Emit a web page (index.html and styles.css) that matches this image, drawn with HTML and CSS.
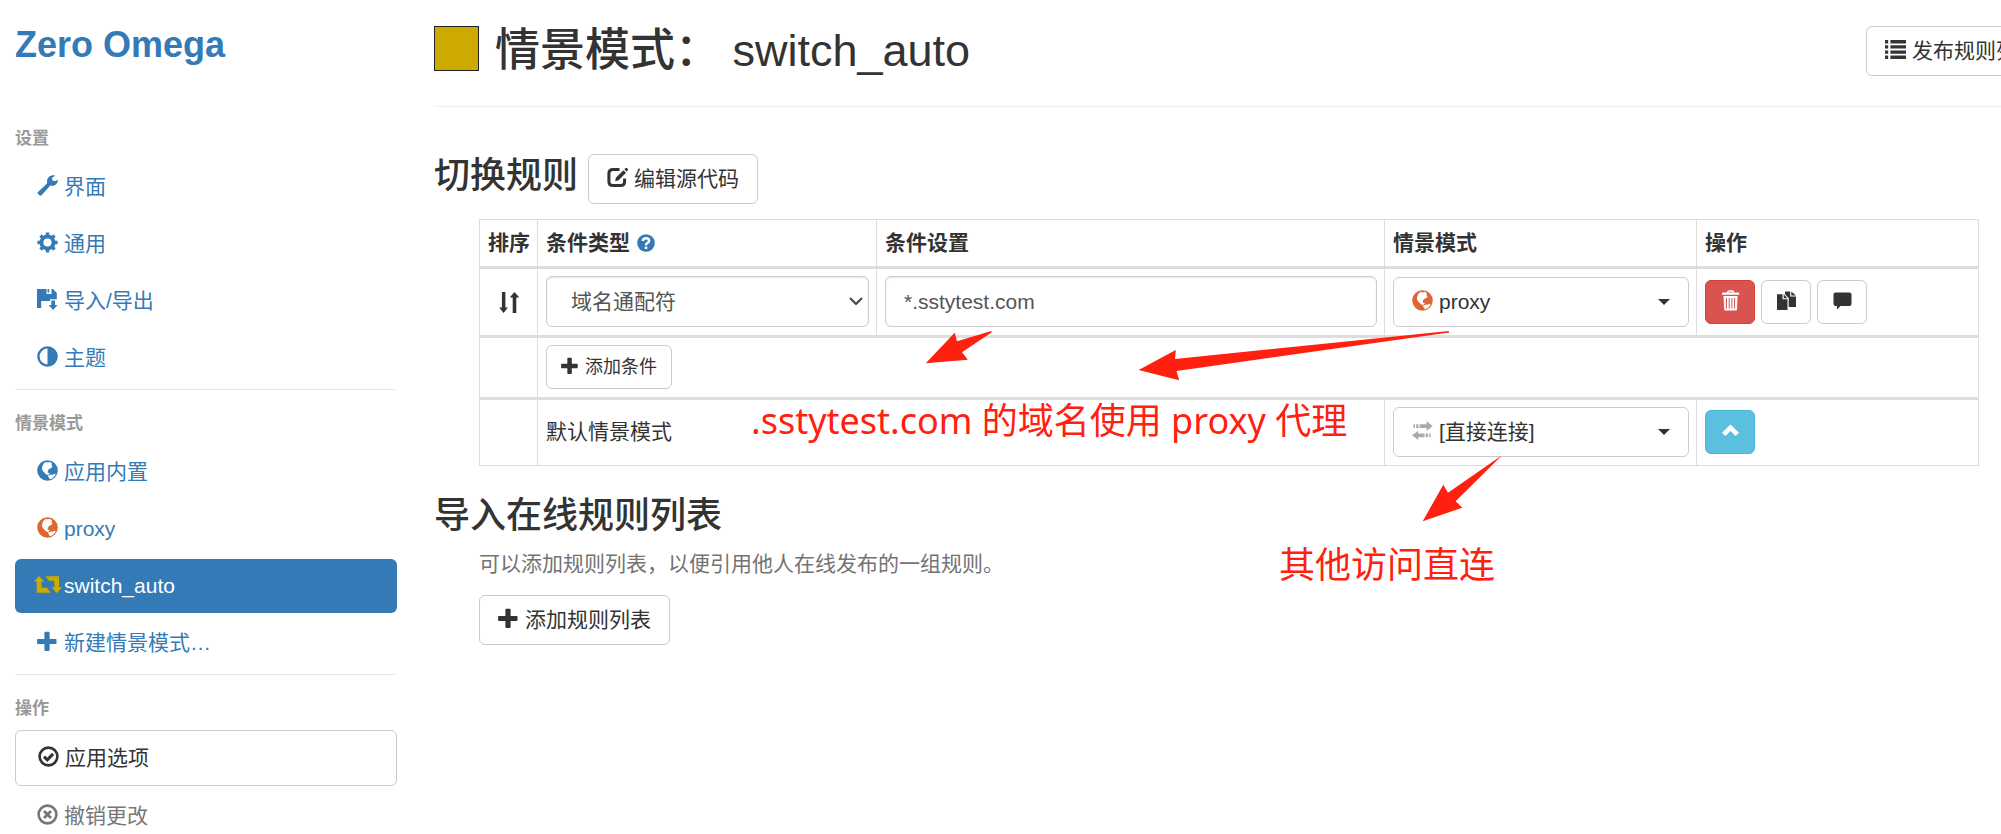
FILE: index.html
```html
<!DOCTYPE html>
<html lang="zh-CN">
<head>
<meta charset="utf-8">
<title>Zero Omega</title>
<link rel="stylesheet" href="styles.css">
</head>
<body>
<svg class="sprite" aria-hidden="true">
  <symbol id="wrench" viewBox="0 0 21 21"><path d="M1 17L10.2 8.300C9.300 4.800 11 1.400 14.700.5c1.400-.3 2.500-.1 3.300.2L14.900 3.100 15.500 5.600l2.600.7L20.800 4.700c.3 3-1.500 5.400-4.400 6-1.300.2-2.300 0-3.100-.3L4.600 20.200c-.6.6-1.500.7-2.100.1L.9 18.800c-.5-.5-.5-1.300.1-1.800z"/></symbol>
  <symbol id="cog" viewBox="0 0 21 21"><circle cx="10.500" cy="10.500" r="6" fill="none" stroke="currentColor" stroke-width="3.800"/><path d="M10.500.4V4M10.500 17v3.600M.4 10.500H4M17 10.500h3.600M3.500 3.500L6 6M15 15l2.500 2.500M3.500 17.500L6 15M15 6l2.500-2.500" stroke="currentColor" stroke-width="3.400"/></symbol>
  <symbol id="save" viewBox="0 0 21 21"><path d="M0 0H4.300V5H14.500V0H16L19.800 4V10.200H13V12H4.200V19H0zM10.500 0h1.700v3.500h-1.700zM4 0h5.500v5H4zM14.300 11.500H18V16H20.600L16.100 21 11.600 16H14.300z"/></symbol>
  <symbol id="adjust" viewBox="0 0 21 21"><circle cx="10.500" cy="10.500" r="9.100" fill="none" stroke="currentColor" stroke-width="2.400"/><path d="M10.500 1.500a9 9 0 0 1 0 18z"/></symbol>
  <symbol id="globe" viewBox="0 0 21 21"><path fill-rule="evenodd" d="M10.500.2a10.300 10.300 0 1 1 0 20.600a10.300 10.300 0 0 1 0-20.600zM7 3L9 2 11 2.600 12.500 1.800 15 3.200 14.500 5 15.500 6.500 13.600 8.600 11.800 9 11 11 10.500 12.600 13 13.300 11 15 9 14.300 6.500 11.800 5 9.500 5.200 6.500zM10.600 15.800L13.300 14.700 16.200 14.600 18.400 13.500 18.200 15.400 15.300 18.500 12.800 19.300 12 17.500z"/></symbol>
  <symbol id="retweet" viewBox="0 0 28 18"><path d="M5 0L10.300 5.600H7.500V11.700H13L16.700 16.700H2.700V5.600H0zM11.300.3H25V11.300H28L22.700 17.300 17.600 11.300H20.300V4.700H15z"/></symbol>
  <symbol id="plus" viewBox="0 0 21 21"><path d="M8.200.8h3.600q.8 0 .8.800V8h6.100q.8 0 .8.800v3.400q0 .8-.8.800H12.600v6.100q0 .8-.8.800H8.200q-.8 0-.8-.8V13H.9q-.8 0-.8-.8V8.800q0-.8.800-.8H7.400V1.600q0-.8.800-.8z"/></symbol>
  <symbol id="ok" viewBox="0 0 21 21"><circle cx="10.500" cy="10.500" r="8.900" fill="none" stroke="currentColor" stroke-width="2.600"/><path d="M6 10.600l3.300 3.300 5.800-6" fill="none" stroke="currentColor" stroke-width="3"/></symbol>
  <symbol id="remove" viewBox="0 0 21 21"><circle cx="10.500" cy="10.500" r="8.900" fill="none" stroke="currentColor" stroke-width="2.600"/><path d="M7 7l7 7M14 7l-7 7" fill="none" stroke="currentColor" stroke-width="2.800"/></symbol>
  <symbol id="list" viewBox="0 0 21 21"><path d="M0 1h3.200v3.400H0zM5.400 1H21v3.400H5.400zM0 6.200h3.200v3.400H0zM5.400 6.200H21v3.400H5.400zM0 11.400h3.200v3.400H0zM5.400 11.400H21v3.400H5.400zM0 16.600h3.200V20H0zM5.400 16.600H21V20H5.400z"/></symbol>
  <symbol id="edit" viewBox="0 0 21 21"><path d="M12.500 2.400H6Q1.900 2.400 1.900 6.400v8.200q0 4 4.100 4h7.600q4 0 4-4V11.500" fill="none" stroke="currentColor" stroke-width="3"/><path d="M8.200 14.200L8.900 10.700 16.400 3.200 19 5.800 11.600 13.300zM17.300 2.300L18.700.9q.6-.5 1.200 0l1 1q.5.600 0 1.200L19.700 4.700z"/></symbol>
  <symbol id="question" viewBox="0 0 21 21"><circle cx="10.500" cy="10.500" r="10.300"/><path d="M6.900 8.200Q7 4.900 10.500 4.900t3.600 3q0 1.700-1.900 2.600-1.700.9-1.700 2.500M10.500 14.500v3" fill="none" stroke="#fff" stroke-width="2.900"/></symbol>
  <symbol id="sort" viewBox="0 0 21 21"><path d="M2.900 0h3.500v15.500H9L4.600 21 .2 15.500H2.900zM13.700 21h3.600V5.500H20.300L15.500 0 10.700 5.500h3z"/></symbol>
  <symbol id="trash" viewBox="0 0 21 21"><path fill-rule="evenodd" d="M7 2.500Q7 .3 9 .3h3.200q2 0 2 2.200h4q1 0 1 1V4.700H2V3.500q0-1 1-1zM8.700 2.500h3.800V1.800H8.700zM3.500 6H17.600L17 19.200Q17 20.600 15.600 20.600H5.600Q4.200 20.600 4.200 19.200zM6 8v10.500h1V8zM8.700 8v10.500h1V8zM11.400 8v10.500h1V8zM14.100 8v10.500h1V8z"/></symbol>
  <symbol id="copy" viewBox="0 0 21 21"><path d="M1 4.200H6.500V9.300H11.500V20H1zM7.700 4.200L11.500 8.200H7.700zM9 1.500H14.200V6.500H20V17H12.700V8L9 4.200zM15.300 1.500L20 5.500H15.300z"/></symbol>
  <symbol id="comment" viewBox="0 0 21 21"><path d="M3.500 2.500h14q2 0 2 2v9.500q0 2-2 2H8.500L5 19.500V16H3.500q-2 0-2-2V4.500q0-2 2-2z"/></symbol>
  <symbol id="chevron" viewBox="0 0 21 21"><path d="M10.500 4.500L19 12.800 15.600 16 10.500 11 5.400 16 2 12.800z"/></symbol>
  <symbol id="transfer" viewBox="0 0 21 21"><path d="M1.500 4.200H3V8H1.500zM4.200 4.200H6.400V8H4.200zM7.600 4.200H14.600V1.200L20.800 6.100 14.600 11V8H7.600zM6.200 10.700L0 15.300 6.200 20V17.200H12.600V13.400H6.200zM13.800 13.400H16V17.200H13.800zM17.200 13.400H18.700V17.200H17.200z"/></symbol>
</svg>

<div class="layout">
  <nav class="sidebar">
    <a class="brand" href="#">Zero Omega</a>
    <h2 class="nav-label">设置</h2>
    <ul class="nav">
      <li><a class="nav-link" href="#ui"><svg class="icon"><use href="#wrench"/></svg>界面</a></li>
      <li><a class="nav-link" href="#general"><svg class="icon"><use href="#cog"/></svg>通用</a></li>
      <li><a class="nav-link" href="#io"><svg class="icon"><use href="#save"/></svg>导入/导出</a></li>
      <li><a class="nav-link" href="#theme"><svg class="icon"><use href="#adjust"/></svg>主题</a></li>
    </ul>
    <hr class="nav-divider">
    <h2 class="nav-label">情景模式</h2>
    <ul class="nav">
      <li><a class="nav-link" href="#builtin"><svg class="icon"><use href="#globe"/></svg>应用内置</a></li>
      <li><a class="nav-link" href="#proxy"><svg class="icon icon-orange"><use href="#globe"/></svg>proxy</a></li>
      <li><a class="nav-link active" href="#switch"><svg class="icon icon-wide"><use href="#retweet"/></svg>switch_auto</a></li>
      <li><a class="nav-link" href="#new"><svg class="icon"><use href="#plus"/></svg>新建情景模式…</a></li>
    </ul>
    <hr class="nav-divider">
    <h2 class="nav-label">操作</h2>
    <ul class="nav">
      <li><button class="nav-link nav-apply" type="button"><svg class="icon"><use href="#ok"/></svg>应用选项</button></li>
      <li><a class="nav-link muted" href="#revert"><svg class="icon"><use href="#remove"/></svg>撤销更改</a></li>
    </ul>
  </nav>

  <main class="main">
    <header class="page-header">
      <span class="swatch"></span>
      <h1 class="page-title">情景模式： switch_auto</h1>
      <button class="btn publish" type="button"><svg class="icon"><use href="#list"/></svg>发布规则列表</button>
    </header>

    <section>
      <div class="section-head">
        <h2 class="section-title">切换规则</h2>
        <button class="btn" type="button"><svg class="icon"><use href="#edit"/></svg>编辑源代码</button>
      </div>
      <table class="rules">
        <colgroup>
          <col class="col-sort"><col class="col-type"><col><col class="col-profile"><col class="col-actions">
        </colgroup>
        <thead>
          <tr>
            <th>排序</th>
            <th>条件类型 <a href="#help" aria-label="帮助"><svg class="icon icon-sm icon-help"><use href="#question"/></svg></a></th>
            <th>条件设置</th>
            <th>情景模式</th>
            <th>操作</th>
          </tr>
        </thead>
        <tbody>
          <tr>
            <td class="sort-cell"><svg class="icon"><use href="#sort"/></svg></td>
            <td>
              <div class="select-wrap">
                <select class="field" aria-label="条件类型"><option>域名通配符</option></select>
                <svg class="select-arrow" viewBox="0 0 14 9"><path d="M1 1l6 6 6-6"/></svg>
              </div>
            </td>
            <td><input class="field" type="text" aria-label="条件设置" value="*.sstytest.com"></td>
            <td><button class="btn dropdown" type="button" aria-haspopup="listbox"><svg class="icon icon-orange"><use href="#globe"/></svg>proxy<span class="caret"></span></button></td>
            <td>
              <div class="actions">
                <button class="btn btn-icon btn-danger" type="button" aria-label="删除"><svg class="icon"><use href="#trash"/></svg></button>
                <button class="btn btn-icon" type="button" aria-label="复制"><svg class="icon"><use href="#copy"/></svg></button>
                <button class="btn btn-icon" type="button" aria-label="备注"><svg class="icon"><use href="#comment"/></svg></button>
              </div>
            </td>
          </tr>
          <tr>
            <td></td>
            <td colspan="4"><button class="btn btn-sm" type="button"><svg class="icon icon-sm"><use href="#plus"/></svg>添加条件</button></td>
          </tr>
          <tr>
            <td></td>
            <td colspan="2">默认情景模式</td>
            <td><button class="btn dropdown" type="button" aria-haspopup="listbox"><svg class="icon icon-gray"><use href="#transfer"/></svg>[直接连接]<span class="caret"></span></button></td>
            <td><button class="btn btn-icon btn-info" type="button" aria-label="上移"><svg class="icon"><use href="#chevron"/></svg></button></td>
          </tr>
        </tbody>
      </table>
    </section>

    <section class="online">
      <h2 class="section-title">导入在线规则列表</h2>
      <p class="help-text">可以添加规则列表，以便引用他人在线发布的一组规则。</p>
      <button class="btn" type="button"><svg class="icon"><use href="#plus"/></svg>添加规则列表</button>
    </section>

    <svg class="arrows" viewBox="920 325 590 205">
      <path d="M991.500 331L957 341.300 954.700 332.700 925.800 363.300 967.800 359.700 962 352.300 991.500 332.500z"/>
      <path d="M1449 331L1175 359 1175.800 350 1138.600 370 1179.200 380.300 1176.500 371 1449 332.500z"/>
      <path d="M1502 455.300L1448 492.700 1443.300 484.700 1422.700 521.300 1462.300 507.700 1455.700 501.300z"/>
    </svg>
    <p class="note note-rule">.sstytest.com 的域名使用 proxy 代理</p>
    <p class="note note-direct">其他访问直连</p>
  </main>
</div>
</body>
</html>
```

FILE: styles.css
```css
* {
  box-sizing: border-box;
}

body {
  margin: 0;
  height: 100vh;
  overflow: hidden;
  background: #fff;
  color: #333;
  font-family: "Liberation Sans", "Noto Sans CJK SC", sans-serif;
  font-size: 21px;
  line-height: 30px;
}

h1, h2, p, ul {
  margin: 0;
  padding: 0;
}

a {
  color: #337ab7;
  text-decoration: none;
}

button, input, select {
  font: inherit;
  color: inherit;
}

.sprite {
  position: absolute;
  width: 0;
  height: 0;
}

.icon {
  flex: none;
  width: 21px;
  height: 21px;
  fill: currentColor;
}

.icon-sm {
  width: 18px;
  height: 18px;
}

.icon-wide {
  width: 28px;
  height: 18px;
  margin: 0 -4px 0 -3px;
  color: #ca0;
}

.icon-orange {
  color: #d63;
}

.icon-gray {
  color: #aaa;
}

.icon-help {
  margin-left: 1px;
  vertical-align: -2px;
}

.layout {
  display: grid;
  grid-template-columns: 412px minmax(0, 1fr);
}

/* Sidebar */

.sidebar {
  padding: 25px 15px 0;
}

.brand {
  display: block;
  padding-bottom: 40px;
  font-size: 36px;
  font-weight: bold;
  line-height: 40px;
}

.nav-label {
  padding: 22px 0 9px;
  color: #999;
  font-size: 17px;
  line-height: 24px;
}

.nav {
  display: flex;
  flex-direction: column;
  gap: 3px;
  list-style: none;
}

.nav-link {
  display: flex;
  align-items: center;
  gap: 6px;
  width: 100%;
  padding: 12px 22px;
  border-radius: 6px;
}

.nav-link .icon {
  margin-bottom: 3px;
}

.nav-link.active {
  background: #337ab7;
  color: #fff;
}

.nav-link.muted {
  color: #777;
}

.nav-apply {
  border: 1px solid #ccc;
  background: #fff;
  color: #333;
}

.nav-divider {
  height: 1px;
  margin: 4px 2px 0 0;
  border: 0;
  background: #e5e5e5;
}

/* Main column */

.main {
  position: relative;
  padding: 26px 22px 0;
}

.page-header {
  display: flex;
  align-items: flex-start;
  gap: 16px;
  margin-right: -78px;
  padding-bottom: 30px;
  border-bottom: 1px solid #eee;
}

.swatch {
  width: 45px;
  height: 45px;
  border: 1px solid #222;
  background: #ca0;
}

.page-title {
  flex: 1;
  font-size: 45px;
  font-weight: 500;
  line-height: 50px;
}

.btn {
  display: inline-flex;
  align-items: center;
  gap: 6px;
  height: 50px;
  padding: 0 18px;
  border: 1px solid #ccc;
  border-radius: 6px;
  background: #fff;
  color: #333;
  white-space: nowrap;
}

.btn .icon {
  margin-bottom: 3px;
}

.section-head {
  display: flex;
  align-items: flex-start;
  gap: 10px;
  padding: 47px 0 15px;
}

.section-title {
  font-size: 36px;
  font-weight: 500;
  line-height: 44px;
}

.rules {
  width: calc(100% - 45px);
  margin-left: 45px;
  border: solid #ddd;
  border-width: 1px 0 0 1px;
  border-spacing: 0;
  table-layout: fixed;
}

.col-sort { width: 58px; }
.col-type { width: 339px; }
.col-profile { width: 312px; }
.col-actions { width: 282px; }

.rules th,
.rules td {
  padding: 7px 7px 8px 8px;
  border-right: 1px solid #ddd;
  border-bottom: 3px solid #ddd;
  text-align: left;
  vertical-align: middle;
}

.rules th {
  padding-top: 8px;
  white-space: nowrap;
}

.rules tbody tr:last-child td {
  border-bottom-width: 1px;
}

.rules td > * {
  vertical-align: top;
}

.rules .sort-cell {
  text-align: center;
}

.sort-cell .icon {
  vertical-align: middle;
}

.field {
  display: block;
  width: 100%;
  height: 51px;
  padding: 0 18px;
  border: 1px solid #ccc;
  border-radius: 6px;
  background: #fff;
  box-shadow: inset 0 1px 2px rgba(0, 0, 0, .1);
  color: #555;
}

select.field {
  padding-left: 24px;
  appearance: none;
}

.select-wrap {
  position: relative;
}

.select-arrow {
  position: absolute;
  top: 21px;
  right: 6px;
  width: 14px;
  height: 9px;
  fill: none;
  stroke: #444;
  stroke-width: 2;
  pointer-events: none;
}

.dropdown {
  width: 100%;
}

.caret {
  margin-left: auto;
  border: 6px solid transparent;
  border-top-color: #333;
  border-bottom: 0;
}

.actions {
  display: flex;
  gap: 6px;
}

.btn-sm {
  height: 44px;
  padding: 0 14px;
  font-size: 18px;
}

.btn-icon {
  justify-content: center;
  width: 50px;
  height: 44px;
  padding: 0;
}

.btn-danger {
  border-color: #d43f3a;
  background: #d9534f;
  color: #fff;
}

.btn-info {
  border-color: #46b8da;
  background: #5bc0de;
  color: #fff;
}

.online {
  padding-top: 28px;
}

.online .btn {
  margin-left: 45px;
}

.help-text {
  padding: 11px 0 16px 45px;
  color: #737373;
}

/* Callouts drawn over the page */

.arrows {
  position: absolute;
  top: 325px;
  left: 508px;
  width: 590px;
  height: 205px;
  fill: #ff2010;
  pointer-events: none;
}

.note {
  position: absolute;
  color: #ff2010;
  font-family: "Noto Sans", "Noto Sans CJK SC", sans-serif;
  font-size: 36px;
  line-height: 50px;
  white-space: nowrap;
}

.note-rule {
  top: 396px;
  left: 339px;
}

.note-direct {
  top: 540px;
  left: 867px;
}
```
